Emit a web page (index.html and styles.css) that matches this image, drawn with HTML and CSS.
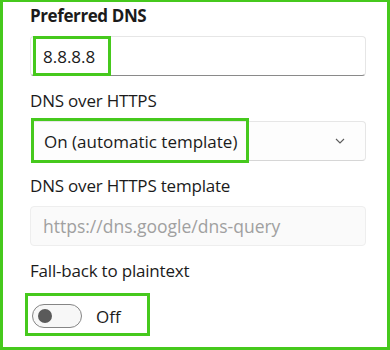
FILE: index.html
```html
<!DOCTYPE html>
<html lang="en">
<head>
    <meta charset="UTF-8">
    <meta name="viewport" content="width=device-width, initial-scale=1.0">
    <title>DNS settings</title>
    <link rel="stylesheet" href="styles.css">
</head>
<body>
    <div class="frame">
        <div class="label bold">Preferred DNS</div>
        <div class="field">
            <span class="value marked">8.8.8.8</span>
        </div>

        <div class="label">DNS over HTTPS</div>
        <div class="select">
            <span class="value">On (automatic template)</span>
            <svg class="chevron" width="10" height="6" viewBox="0 0 10 6">
                <path d="M1 1 L5 5 L9 1" fill="none" stroke="#5c5c5c" stroke-width="1.1"/>
            </svg>
            <div class="mark mark-select"></div>
        </div>

        <div class="label">DNS over HTTPS template</div>
        <div class="field disabled">
            <span class="placeholder">https://dns.google/dns-query</span>
        </div>

        <div class="label">Fall-back to plaintext</div>
        <div class="toggle-row">
            <div class="toggle"><div class="knob"></div></div>
            <span class="toggle-text">Off</span>
            <div class="mark mark-toggle"></div>
        </div>
    </div>
</body>
</html>
```

FILE: styles.css
```css
html, body {
    margin: 0;
    background: #fff;
}
body {
    font-family: 'Open Sans', 'Noto Sans', sans-serif;
    color: #1b1b1b;
    width: 390px;
    height: 350px;
    overflow: hidden;
}
.frame {
    box-sizing: border-box;
    width: 390px;
    height: 350px;
    border: 3px solid #46c91d;
    border-top-width: 2px;
    padding: 3px 21px 0 27px;
    display: flex;
    flex-direction: column;
}
.label {
    font-size: 17px;
    line-height: 22px;
    margin-top: 14px;
    margin-bottom: 9px;
    letter-spacing: -0.2px;
}
.frame > .label:first-child {
    margin-top: 0;
}
.bold {
    font-weight: 700;
    letter-spacing: -0.4px;
}
.field, .select {
    position: relative;
    box-sizing: border-box;
    height: 40px;
    border: 1px solid #e6e6e6;
    border-bottom-color: #8a8a8a;
    border-radius: 4px;
    display: flex;
    align-items: center;
    font-size: 17px;
}
.value {
    padding-left: 12px;
}
.value.marked {
    box-sizing: border-box;
    height: 40px;
    margin: -1px 0 -1px 2px;
    border: 3px solid #46c91d;
    padding: 0 13px 0 7px;
    display: flex;
    align-items: center;
}
.select {
    border-bottom-color: #d6d6d6;
    background: #fdfdfd;
    justify-content: space-between;
    padding-right: 20px;
    margin-left: 1px;
    width: 335px;
}
.chevron {
    display: block;
}
.mark {
    position: absolute;
    border: 3px solid #46c91d;
    pointer-events: none;
}
.mark-select {
    left: -1px;
    top: -4px;
    width: 212px;
    height: 39px;
}
.disabled {
    background: #fafafa;
    border-color: #eeeeee;
    font-size: 17.5px;
}
.placeholder {
    padding-left: 12px;
    color: #a0a0a0;
}
.toggle-row {
    position: relative;
    display: flex;
    align-items: center;
    gap: 14px;
    margin-top: 13px;
    margin-left: 2px;
    height: 24px;
    font-size: 17px;
}
.toggle {
    box-sizing: border-box;
    width: 50px;
    height: 24px;
    border: 1px solid #858585;
    border-radius: 12px;
    background: #f7f7f7;
    display: flex;
    align-items: center;
    padding-left: 5px;
}
.knob {
    width: 14px;
    height: 14px;
    border-radius: 50%;
    background: #5a5a5a;
}
.mark-toggle {
    left: -7px;
    top: -11px;
    width: 119px;
    height: 37px;
}
```
